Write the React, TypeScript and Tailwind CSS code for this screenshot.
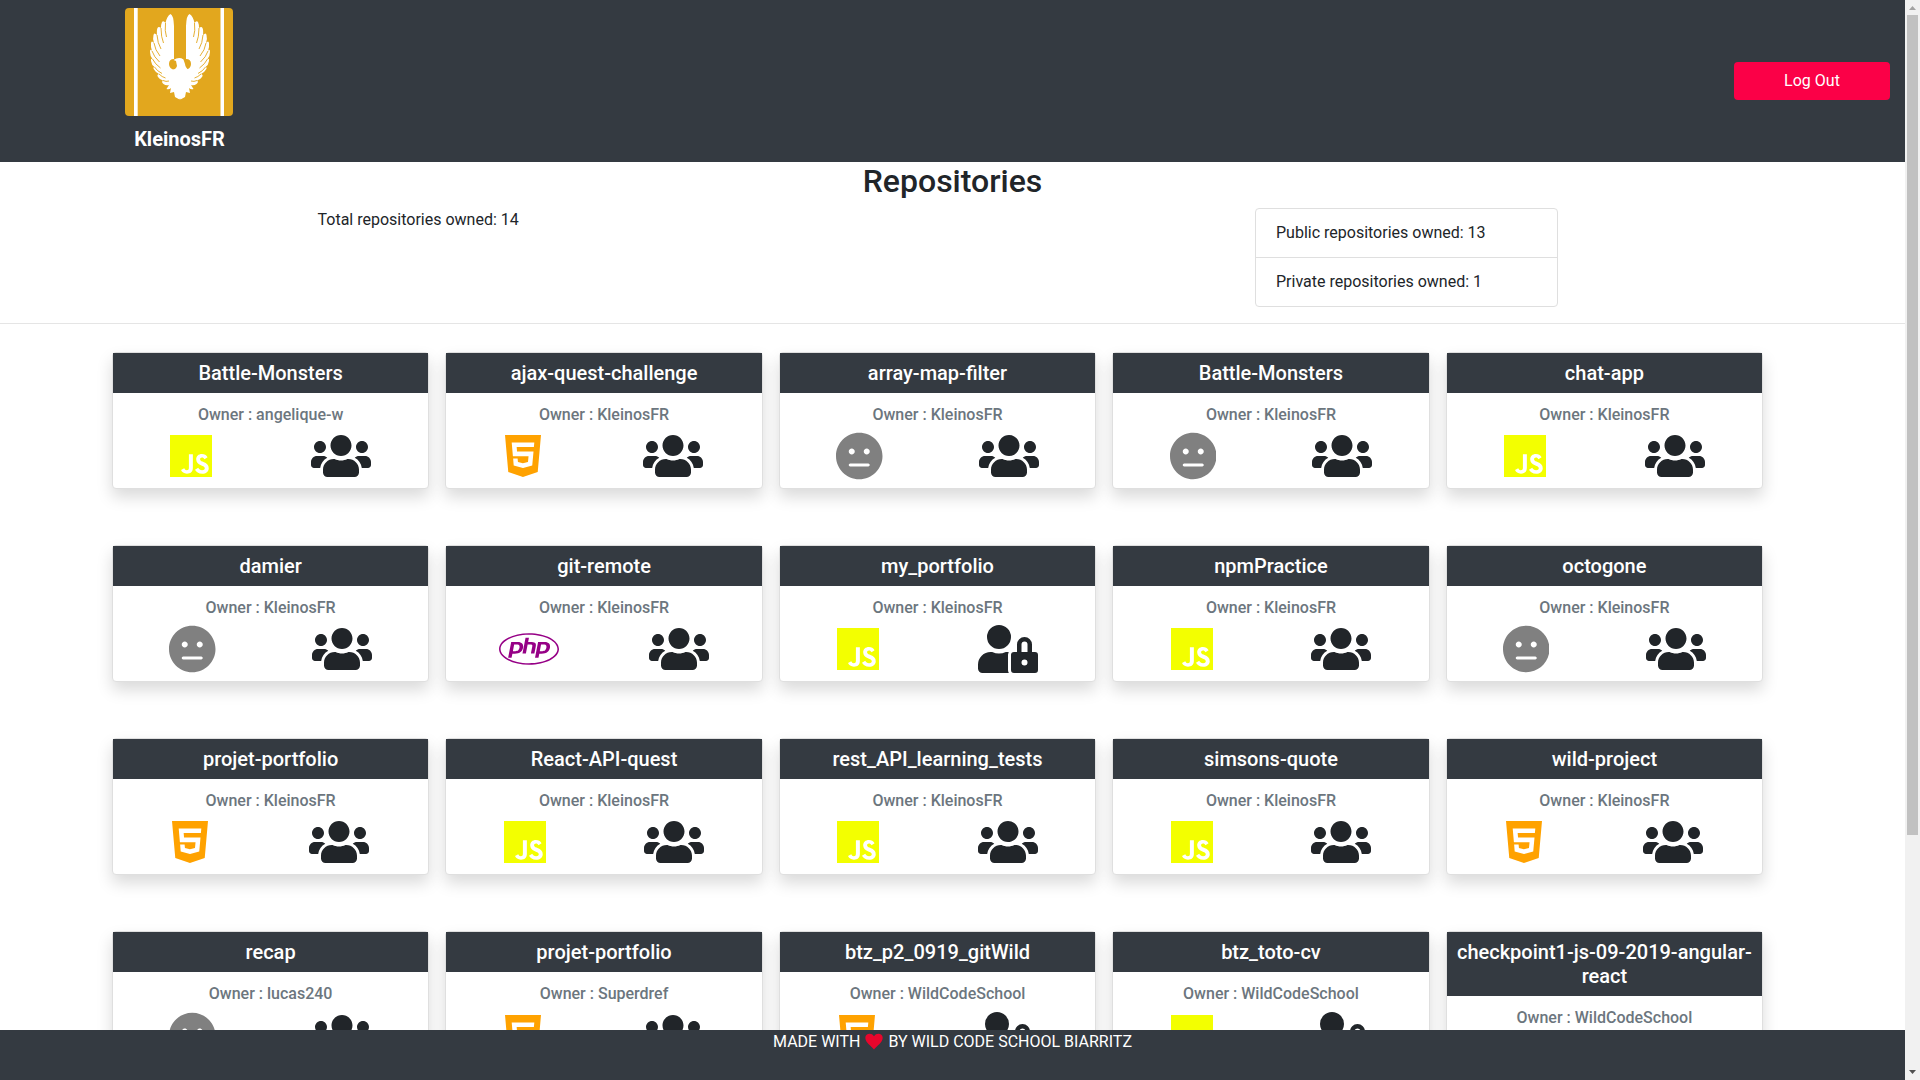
import React from "react";
import { FaUsers, FaJs, FaHtml5, FaMeh, FaPhp, FaUserLock } from "react-icons/fa";

type Lang = "js" | "html" | "none" | "php";
type Repo = { name: string; owner: string; lang: Lang; locked?: boolean };

const repos: Repo[] = [
  { name: "Battle-Monsters", owner: "angelique-w", lang: "js" },
  { name: "ajax-quest-challenge", owner: "KleinosFR", lang: "html" },
  { name: "array-map-filter", owner: "KleinosFR", lang: "none" },
  { name: "Battle-Monsters", owner: "KleinosFR", lang: "none" },
  { name: "chat-app", owner: "KleinosFR", lang: "js" },
  { name: "damier", owner: "KleinosFR", lang: "none" },
  { name: "git-remote", owner: "KleinosFR", lang: "php" },
  { name: "my_portfolio", owner: "KleinosFR", lang: "js", locked: true },
  { name: "npmPractice", owner: "KleinosFR", lang: "js" },
  { name: "octogone", owner: "KleinosFR", lang: "none" },
  { name: "projet-portfolio", owner: "KleinosFR", lang: "html" },
  { name: "React-API-quest", owner: "KleinosFR", lang: "js" },
  { name: "rest_API_learning_tests", owner: "KleinosFR", lang: "js" },
  { name: "simsons-quote", owner: "KleinosFR", lang: "js" },
  { name: "wild-project", owner: "KleinosFR", lang: "html" },
  { name: "recap", owner: "lucas240", lang: "none" },
  { name: "projet-portfolio", owner: "Superdref", lang: "html" },
  { name: "btz_p2_0919_gitWild", owner: "WildCodeSchool", lang: "html", locked: true },
  { name: "btz_toto-cv", owner: "WildCodeSchool", lang: "js", locked: true },
  { name: "checkpoint1-js-09-2019-angular-react", owner: "WildCodeSchool", lang: "html", locked: true },
];

function LangIcon({ lang }: { lang: Lang }) {
  switch (lang) {
    case "js":
      return <FaJs className="h-12 w-[42px] text-[#f3ff00]" />;
    case "html":
      return <FaHtml5 className="h-12 w-9 text-[#ffa200]" />;
    case "php":
      return <FaPhp className="h-12 w-[60px] text-[#960086]" />;
    default:
      return <FaMeh className="h-12 w-[46.5px] text-[#808080]" />;
  }
}

function RepoCard({ repo }: { repo: Repo }) {
  return (
    <article className="self-start rounded border border-[#dfdfdf] bg-white shadow-[0_8px_16px_rgba(0,0,0,0.15)]">
      <h5 className="bg-[#343a41] p-2 text-center text-xl leading-6 font-medium text-white">{repo.name}</h5>
      <div className="px-2 pt-3 pb-2">
        <h6 className="text-center text-base leading-[19.2px] font-medium text-[#6c767e]">Owner : {repo.owner}</h6>
        <div className="mt-2 flex justify-around">
          <LangIcon lang={repo.lang} />
          {repo.locked ? <FaUserLock className="h-12 w-[60px]" /> : <FaUsers className="h-12 w-[60px]" />}
        </div>
      </div>
    </article>
  );
}

/* Left wing: a solid silhouette cut by tapering feather gaps. */
function Wing() {
  return (
    <g>
      <path
        d="M49 51V18Q48.500 7 45.500 6Q42 8 40.500 15Q38.500 12 37 14Q36 16 36 20Q33.500 18 32.500 20Q31.500 22 32 27Q29 24 28.500 27Q27.500 30 29 35Q26.500 32 26 35Q25.500 39 27 43Q25 40 25 44Q25 48 27.500 51Q25.500 50 26 53Q26.500 57 29.500 59Q27.500 59 29 61.500Q31 65 34 66Q31.500 66.500 33 69Q35 72 38 72.500Q36 74 38.500 76Q41 78 44 77L41.500 81Q44 82 46 80L45 85L49 84L50 89L54.500 91.500L56 88V62L50 62Q44 61 44 56Q44 51 49 51Z"
        fill="#fff"
      />
      <path
        d="M40.500 15Q39.500 23 41.500 29M36 20Q36 29 38.500 35M32 27Q32.500 35 36 41M29 35Q30 42 35 48M27 43Q29 49 34.500 54M27.500 51Q30 56 35.500 60M29.500 59Q32 63 37 65.500M34 66Q37 69 40.500 70M38 72.500Q41 74 44 73"
        fill="none"
        stroke="#e2a71e"
        strokeWidth="0.9"
      />
    </g>
  );
}

function Avatar() {
  return (
    <svg viewBox="0 0 108 108" className="size-[108px] rounded" aria-label="KleinosFR">
      <rect width="108" height="108" fill="#e2a71e" />
      <path d="M9 0h3.700v108H9zM95.500 0h3.500v108h-3.500z" fill="#fff" />
      <Wing />
      <g transform="translate(110 0) scale(-1 1)">
        <Wing />
      </g>
      <path d="M48.500 52Q54 48.500 58.500 51.500L60 56Q60.500 60 64 62L60 72H50L47 62Q51 61.500 52 58L51 53Z" fill="#fff" />
    </svg>
  );
}

function Heart() {
  return (
    <svg viewBox="0 0 18 17" className="mx-[5px] mt-[3px] h-[17px] w-[18px]" aria-label="love">
      <path d="M9 16.500C6.500 13 0.300 9.500 0.300 4.700C0.300 0.500 6.500-1 9 3.300C11.500-1 17.700 0.500 17.700 4.700C17.700 9.500 11.500 13 9 16.500Z" fill="#e8062c" />
    </svg>
  );
}

function Scrollbar() {
  return (
    <div className="flex w-[15px] shrink-0 flex-col items-center bg-[#f1f1f1]">
      <svg viewBox="0 0 15 15" className="size-[15px]">
        <path d="M4 10h7L7.500 6z" fill="#a3a3a3" />
      </svg>
      <div className="h-[820px] w-[11px] bg-[#c1c1c1]" />
      <svg viewBox="0 0 15 15" className="mt-auto size-[15px]">
        <path d="M4 5h7L7.500 9z" fill="#505050" />
      </svg>
    </div>
  );
}

export default function App() {
  return (
    <div className="flex h-screen overflow-hidden bg-white font-[Roboto,sans-serif] text-base text-[#212529]">
      <div className="flex min-w-0 flex-1 flex-col">
        <header className="flex h-[162px] shrink-0 items-start justify-between bg-[#343a41] pr-[15px] pl-[125px] text-white">
          <div className="flex flex-col items-center pt-2">
            <Avatar />
            <p className="mt-2 pl-px text-xl leading-[30px] font-bold">KleinosFR</p>
          </div>
          <button className="mt-[62px] h-[38px] w-[156px] rounded bg-[#fb0047]">Log Out</button>
        </header>
        <main className="min-h-0 flex-1 overflow-hidden">
          <h2 className="text-center text-[32px] leading-[38.4px] font-medium">Repositories</h2>
          <section className="flex h-[124px] justify-between border-b border-[#e5e5e5] pt-2 pr-[347px] pl-[317.5px]">
            <p>Total repositories owned: 14</p>
            <ul className="h-[99px] w-[303px] divide-y divide-[#dfdfdf] rounded border border-[#dfdfdf]">
              <li className="px-5 py-3">Public repositories owned: 13</li>
              <li className="px-5 py-3">Private repositories owned: 1</li>
            </ul>
          </section>
          <section className="mt-[27.3px] mr-[142px] ml-[112px] grid grid-cols-5 gap-x-[16.25px] gap-y-14">
            {repos.map((repo, i) => (
              <RepoCard key={i} repo={repo} />
            ))}
          </section>
        </main>
        <footer className="flex h-[50px] shrink-0 items-start justify-center bg-[#343a41] text-white">
          <span>MADE WITH</span>
          <Heart />
          <span>BY WILD CODE SCHOOL BIARRITZ</span>
        </footer>
      </div>
      <Scrollbar />
    </div>
  );
}
